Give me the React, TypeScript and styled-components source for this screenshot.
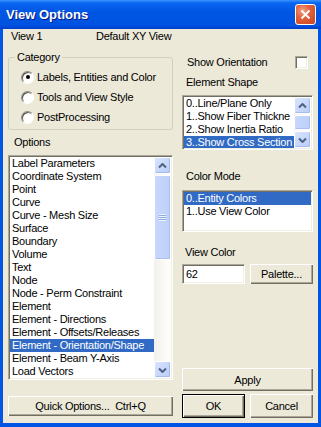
import styled, { createGlobalStyle, css } from "styled-components";

const GlobalStyle = createGlobalStyle`
  html, body { margin: 0; padding: 0; background: #fff; }
  body {
    font-family: "Liberation Sans", Arial, sans-serif;
    font-size: 11px;
    letter-spacing: -0.25px;
    color: #000;
  }
  * { box-sizing: border-box; }
`;

const optionItems = [
  "Label Parameters",
  "Coordinate System",
  "Point",
  "Curve",
  "Curve - Mesh Size",
  "Surface",
  "Boundary",
  "Volume",
  "Text",
  "Node",
  "Node - Perm Constraint",
  "Element",
  "Element - Directions",
  "Element - Offsets/Releases",
  "Element - Orientation/Shape",
  "Element - Beam Y-Axis",
  "Load Vectors",
];

// the second entry is cut by the scrollbar in the dialog
const shapeItems = [
  "0..Line/Plane Only",
  "1..Show Fiber Thickne",
  "2..Show Inertia Ratio",
  "3..Show Cross Section",
];

const colorItems = ["0..Entity Colors", "1..Use View Color"];

const categories = ["Labels, Entities and Color", "Tools and View Style", "PostProcessing"];

function Arrow({ down }: { down?: boolean }) {
  return (
    <svg width="9" height="6" viewBox="0 0 9 6">
      <path
        d={down ? "M1 1.5 L4.5 5 L8 1.5" : "M1 4.5 L4.5 1 L8 4.5"}
        fill="none"
        stroke="#4D6185"
        strokeWidth="2"
      />
    </svg>
  );
}

function ScrollBar({ thumb, grip }: { thumb: number; grip?: boolean }) {
  return (
    <Scroll>
      <ScrollButton>
        <Arrow />
      </ScrollButton>
      <Thumb $size={thumb}>{grip && <Grip />}</Thumb>
      <Track />
      <ScrollButton>
        <Arrow down />
      </ScrollButton>
    </Scroll>
  );
}

export default function App() {
  return (
    <>
      <GlobalStyle />
      <Window>
        <TitleBar>
          <Title>View Options</Title>
          <CloseButton>
            <svg width="11" height="11" viewBox="0 0 11 11">
              <path d="M1.5 1.5 L9.5 9.5 M9.5 1.5 L1.5 9.5" stroke="#fff" strokeWidth="2" />
            </svg>
          </CloseButton>
        </TitleBar>
        <Body>
          <Header>
            <ViewName>View 1</ViewName>
            <span>Default XY View</span>
          </Header>
          <Columns>
            <Column>
              <GroupBox>
                <GroupLabel>Category</GroupLabel>
                <RadioList>
                  {categories.map((c, i) => (
                    <RadioRow key={c}>
                      <Radio $checked={i === 0} />
                      {c}
                    </RadioRow>
                  ))}
                </RadioList>
              </GroupBox>
              <SectionLabel $indent={6} $top={6}>Options</SectionLabel>
              <ListBox $height={225} $top={6}>
                <Items>
                  {optionItems.map((o, i) => (
                    <Item key={o} $selected={i === 14}>
                      {o}
                    </Item>
                  ))}
                </Items>
                <ScrollBar thumb={85} grip />
              </ListBox>
              <Button $height={20} $top={16}>
                Quick Options...&nbsp;&nbsp;Ctrl+Q
              </Button>
            </Column>
            <Column>
              <CheckRow>
                Show Orientation
                <CheckBox />
              </CheckRow>
              <SectionLabel $indent={4} $top={7}>Element Shape</SectionLabel>
              <ListBox $height={55} $top={6}>
                <Items>
                  {shapeItems.map((o, i) => (
                    <Item key={o} $selected={i === 3}>
                      {o}
                    </Item>
                  ))}
                </Items>
                <ScrollBar thumb={15} />
              </ListBox>
              <SectionLabel $indent={4} $top={20}>Color Mode</SectionLabel>
              <ListBox $height={42} $top={7}>
                <Items>
                  {colorItems.map((o, i) => (
                    <Item key={o} $selected={i === 0}>
                      {o}
                    </Item>
                  ))}
                </Items>
              </ListBox>
              <SectionLabel $indent={3} $top={14}>View Color</SectionLabel>
              <ButtonRow $top={5}>
                <TextField>62</TextField>
                <Button $height={20}>Palette...</Button>
              </ButtonRow>
              <Button $height={23} $top="auto">
                Apply
              </Button>
              <ButtonRow $top={3}>
                <Button $height={24} $default>
                  OK
                </Button>
                <Button $height={24}>Cancel</Button>
              </ButtonRow>
            </Column>
          </Columns>
        </Body>
      </Window>
    </>
  );
}

const sunken = css`
  border: 1px solid;
  border-color: #aca899 #fff #fff #aca899;
  box-shadow: inset 1px 1px #716f64, inset -1px -1px #f1efe2;
`;

const Window = styled.div`
  width: 321px;
  height: 427px;
  display: flex;
  flex-direction: column;
  background: #ece9d8;
`;

const TitleBar = styled.div`
  height: 29px;
  flex: none;
  display: flex;
  align-items: center;
  justify-content: space-between;
  padding: 0 5px 1px 6px;
  background: linear-gradient(
    to bottom,
    #3d95ff 0%,
    #0a66f0 10%,
    #0056e4 40%,
    #0053e1 85%,
    #0046d4 95%,
    #003cc4 100%
  );
`;

const Title = styled.div`
  font-weight: bold;
  font-size: 13px;
  letter-spacing: 0;
  color: #fff;
  text-shadow: 1px 1px #0a1883;
`;

const CloseButton = styled.div`
  width: 21px;
  height: 21px;
  display: flex;
  align-items: center;
  justify-content: center;
  border: 1px solid #fff;
  border-radius: 3px;
  background: radial-gradient(circle at 35% 30%, #f2a585 0%, #e2613b 40%, #c8431f 100%);
`;

const Body = styled.div`
  flex: 1;
  display: flex;
  flex-direction: column;
  border: 0 solid #0055e5;
  border-width: 0 3px 4px;
  padding: 1px 5px 5px;
`;

const Header = styled.div`
  display: flex;
  padding-left: 3px;
  line-height: 13px;
`;

const ViewName = styled.span`
  width: 85px;
`;

const Columns = styled.div`
  flex: 1;
  display: grid;
  grid-template-columns: 165px 131px;
  column-gap: 9px;
`;

const Column = styled.div`
  display: flex;
  flex-direction: column;
`;

const GroupBox = styled.div`
  margin-top: 14px;
  border: 1px solid #d0d0bf;
  border-radius: 3px;
  padding: 0 0 2px 12px;
  display: flex;
  flex-direction: column;
`;

const GroupLabel = styled.div`
  align-self: flex-start;
  margin: -7px 0 0 -6px;
  padding: 0 2px;
  line-height: 13px;
  background: #ece9d8;
`;

const RadioList = styled.div`
  padding-top: 3px;
`;

const RadioRow = styled.div`
  height: 20px;
  display: flex;
  align-items: center;
  gap: 3px;
`;

const Radio = styled.span<{ $checked?: boolean }>`
  width: 13px;
  height: 13px;
  border-radius: 50%;
  border: 1px solid;
  border-color: #8f8c7f #fff #fff #8f8c7f;
  box-shadow: inset 1px 1px #55534b;
  background: #fff;
  display: flex;
  align-items: center;
  justify-content: center;
  &::after {
    content: "";
    width: 4px;
    height: 4px;
    border-radius: 50%;
    background: ${(p) => (p.$checked ? "#000" : "transparent")};
  }
`;

const SectionLabel = styled.div<{ $indent: number; $top: number }>`
  margin-top: ${(p) => p.$top}px;
  padding-left: ${(p) => p.$indent}px;
  line-height: 13px;
`;

const ListBox = styled.div<{ $height: number; $top: number }>`
  ${sunken};
  height: ${(p) => p.$height}px;
  margin-top: ${(p) => p.$top}px;
  display: flex;
  background: #fff;
  padding: 1px;
  overflow: hidden;
`;

const Items = styled.div`
  flex: 1;
  min-width: 0;
  overflow: hidden;
`;

const Item = styled.div<{ $selected?: boolean }>`
  height: 13px;
  line-height: 13px;
  padding: 0 2px;
  white-space: nowrap;
  overflow: hidden;
  background: ${(p) => (p.$selected ? "#316ac5" : "transparent")};
  color: ${(p) => (p.$selected ? "#fff" : "#000")};
`;

const Scroll = styled.div`
  width: 17px;
  flex: none;
  display: flex;
  flex-direction: column;
  background: linear-gradient(to right, #f3f1ec, #fefefb);
`;

const ScrollButton = styled.div`
  height: 17px;
  flex: none;
  display: flex;
  align-items: center;
  justify-content: center;
  border: 1px solid #fff;
  border-radius: 2px;
  background: linear-gradient(135deg, #d9e4fd, #b9cdf8);
  box-shadow: inset -1px -1px #a3bbf1;
`;

const Thumb = styled.div<{ $size: number }>`
  height: ${(p) => p.$size}px;
  flex: none;
  margin: 1px 0;
  border: 1px solid #fff;
  border-radius: 2px;
  background: linear-gradient(to right, #c9d8fc, #bcd0f9);
  box-shadow: inset -1px -1px #a8bef5;
  display: flex;
  align-items: center;
  justify-content: center;
`;

const Grip = styled.div`
  width: 7px;
  height: 7px;
  background: repeating-linear-gradient(
    to bottom,
    #eef4fe 0,
    #eef4fe 1px,
    #8caae6 1px,
    #8caae6 2px
  );
`;

const Track = styled.div`
  flex: 1;
`;

const CheckRow = styled.div`
  margin-top: 13px;
  display: flex;
  align-items: center;
  justify-content: space-between;
  padding: 0 5px 0 5px;
  line-height: 13px;
`;

const CheckBox = styled.span`
  width: 13px;
  height: 13px;
  ${sunken};
  background: #fff;
`;

const ButtonRow = styled.div<{ $top: number }>`
  margin-top: ${(p) => p.$top}px;
  display: grid;
  grid-template-columns: 63px 63px;
  column-gap: 5px;
`;

const TextField = styled.div`
  height: 20px;
  ${sunken};
  background: #fff;
  padding: 0 3px;
  line-height: 18px;
`;

const Button = styled.button<{ $height: number; $top?: number | "auto"; $default?: boolean }>`
  font: inherit;
  letter-spacing: inherit;
  color: #000;
  height: ${(p) => p.$height}px;
  margin: 0;
  margin-top: ${(p) => (p.$top === "auto" ? "auto" : `${p.$top ?? 0}px`)};
  padding: 0;
  background: #ece9d8;
  border: none;
  box-shadow: inset 1px 1px #fff, inset -1px -1px #716f64, inset -2px -2px #aca899;
  ${(p) =>
    p.$default &&
    css`
      border: 1px solid #000;
    `}
`;
